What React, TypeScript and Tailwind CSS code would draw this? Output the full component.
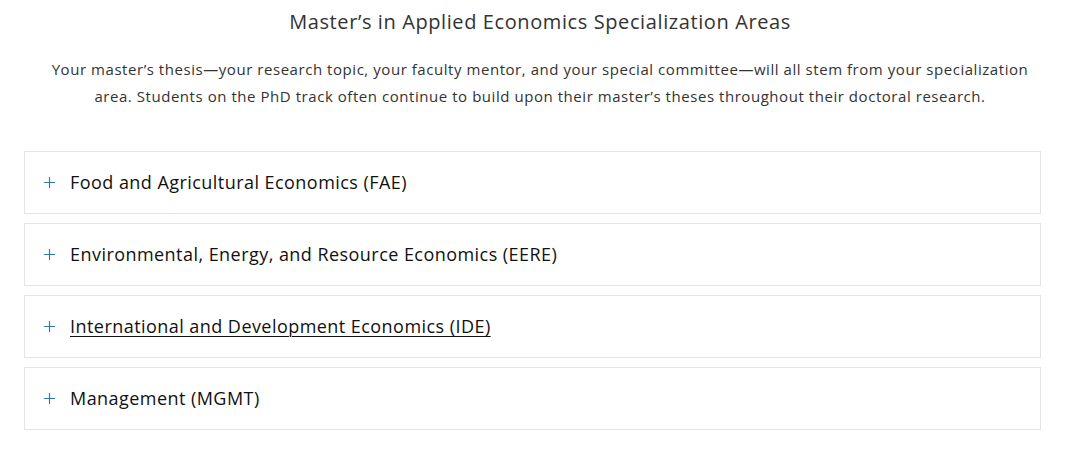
import { Plus } from 'lucide-react'

const areas = [
  { id: 'fae', label: 'Food and Agricultural Economics (FAE)' },
  { id: 'eere', label: 'Environmental, Energy, and Resource Economics (EERE)' },
  { id: 'ide', label: 'International and Development Economics (IDE)', link: true },
  { id: 'mgmt', label: 'Management (MGMT)' },
]

function AreaItem({ label, link }: { label: string; link?: boolean }) {
  return (
    <div className="h-[63px] border border-[#e3e3e3] bg-white flex items-center pl-[16px]">
      <Plus size={17} strokeWidth={1.6} className="text-[#2a74b8] mr-[12px]" />
      <span className={`text-[18px] tracking-[0.45px] text-[#111] ${link ? 'underline underline-offset-[3px] decoration-1' : ''}`}>
        {label}
      </span>
    </div>
  )
}

export default function App() {
  return (
    <div className="w-[1080px] h-[449px] bg-white font-['Open_Sans',sans-serif] pt-[8px]">
      <h2 className="text-center text-[20px] leading-[28px] tracking-[0.6px] text-[#333]">
        Master’s in Applied Economics Specialization Areas
      </h2>
      <p className="mt-[20px] text-center text-[15px] leading-[27px] tracking-[0.55px] text-[#333] px-[40px]">
        Your master’s thesis—your research topic, your faculty mentor, and your special committee—will all stem from your specialization area. Students on the PhD track often continue to build upon their master’s theses throughout their doctoral research.
      </p>
      <div className="mx-[24px] w-[1017px] mt-[41px] flex flex-col gap-[9px]">
        {areas.map(a => (
          <AreaItem key={a.id} label={a.label} link={a.link} />
        ))}
      </div>
    </div>
  )
}
